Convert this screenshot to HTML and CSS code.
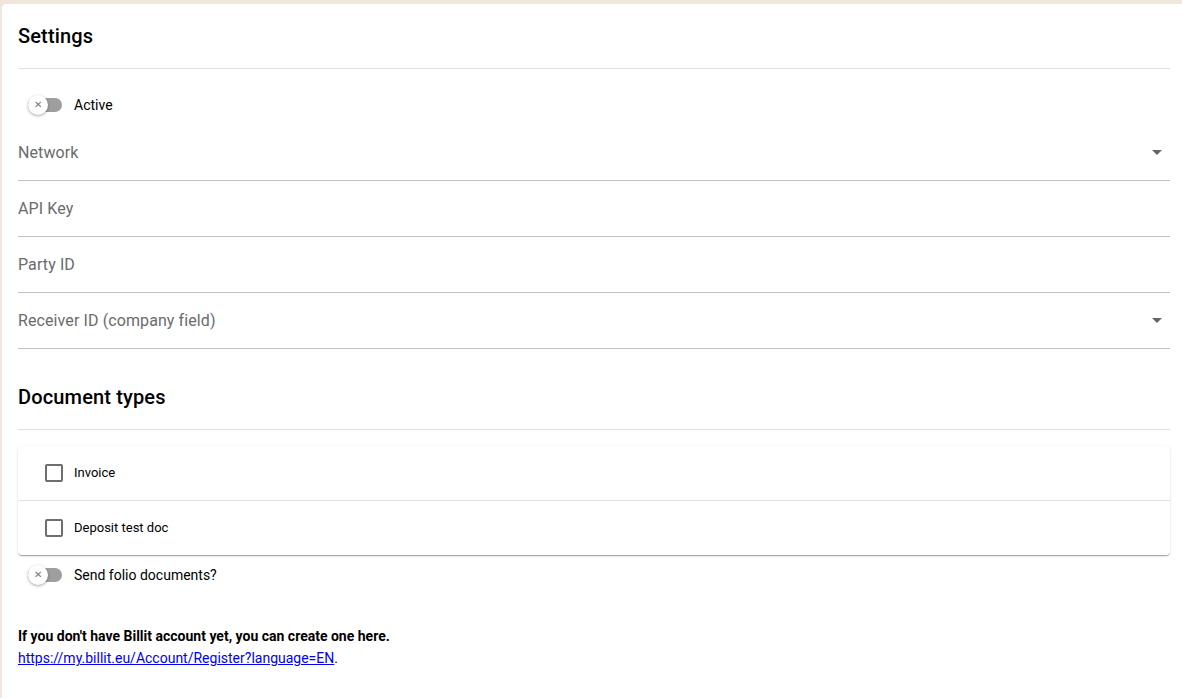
FILE: index.html
```html
<!DOCTYPE html>
<html>
<head>
<meta charset="utf-8">
<link rel="stylesheet" href="styles.css">
</head>
<body>
<div class="card">
  <div class="section-head"><h2>Settings</h2></div>
  <div class="switch-row first">
    <span class="switch"><span class="track"></span><span class="thumb">&#x2715;</span></span>
    <span class="switch-label">Active</span>
  </div>
  <div class="field"><span class="label">Network</span><span class="arrow"></span></div>
  <div class="field"><span class="label">API Key</span></div>
  <div class="field"><span class="label">Party ID</span></div>
  <div class="field"><span class="label">Receiver ID (company field)</span><span class="arrow"></span></div>
  <div class="section-head second"><h2>Document types</h2></div>
  <div class="list">
    <div class="list-row"><span class="checkbox"></span><span class="row-label">Invoice</span></div>
    <div class="list-row"><span class="checkbox"></span><span class="row-label">Deposit test doc</span></div>
  </div>
  <div class="switch-row">
    <span class="switch"><span class="track"></span><span class="thumb">&#x2715;</span></span>
    <span class="switch-label">Send folio documents?</span>
  </div>
  <p class="note"><strong>If you don't have Billit account yet, you can create one here.</strong><br><a href="#">https://my.billit.eu/Account/Register?language=EN</a>.</p>
</div>
</body>
</html>
```
FILE: styles.css
```css
html, body {
  margin: 0;
  padding: 0;
  overflow: hidden;
}
body {
  background: #efe6dc;
  font-family: Roboto, "Liberation Sans", sans-serif;
  color: #000;
  height: 698px;
}
.card {
  box-sizing: border-box;
  margin: 4px 0 0 2px;
  width: 1200px;
  height: 694px;
  padding: 0 32px 0 16px;
  background: #fff;
  border-radius: 4px 4px 0 0;
}
.section-head {
  height: 64px;
  display: flex;
  align-items: center;
  border-bottom: 1px solid #e0e0e0;
}
.section-head.second {
  margin-top: 16px;
}
.section-head h2 {
  margin: 0;
  font-size: 20px;
  font-weight: 500;
  letter-spacing: 0.15px;
}
.switch-row {
  height: 40px;
  display: flex;
  align-items: center;
  padding-left: 10px;
}
.switch-row.first {
  margin-top: 16px;
}
.switch {
  position: relative;
  width: 34px;
  height: 20px;
  display: inline-block;
}
.track {
  position: absolute;
  left: 0;
  top: 3px;
  width: 34px;
  height: 14px;
  border-radius: 7px;
  background: #9e9e9e;
}
.thumb {
  position: absolute;
  left: 0;
  top: 0;
  width: 20px;
  height: 20px;
  border-radius: 50%;
  background: #fff;
  box-shadow: 0 1px 3px rgba(0,0,0,0.35);
  color: #757575;
  font-size: 10px;
  line-height: 20px;
  text-align: center;
}
.switch-label {
  margin-left: 12px;
  font-size: 14px;
}
.field {
  height: 55px;
  border-bottom: 1px solid #c2c2c2;
  display: flex;
  align-items: center;
  justify-content: space-between;
}
.field .label {
  font-size: 16px;
  color: #6b6b6b;
  letter-spacing: 0.1px;
}
.arrow {
  width: 0;
  height: 0;
  border-left: 5px solid transparent;
  border-right: 5px solid transparent;
  border-top: 5px solid #666;
  margin-right: 8px;
}
.list {
  margin-top: 16px;
  border-radius: 4px;
  box-shadow: 0 2px 1px -1px rgba(0,0,0,0.2), 0 1px 1px 0 rgba(0,0,0,0.14), 0 1px 3px 0 rgba(0,0,0,0.12);
  background: #fff;
}
.list-row {
  height: 54px;
  box-sizing: border-box;
  padding-bottom: 1px;
  display: flex;
  align-items: center;
  padding-left: 27px;
}
.list-row + .list-row {
  height: 55px;
  border-top: 1px solid #e0e0e0;
}
.checkbox {
  width: 14px;
  height: 14px;
  border: 2px solid #6e6e6e;
  border-radius: 2px;
  box-sizing: content-box;
}
.row-label {
  margin-left: 11px;
  font-size: 13px;
}
.note {
  margin: 30px 0 0;
  font-size: 14px;
  line-height: 22px;
}
.note strong {
  font-weight: 700;
}
.note a {
  color: #0000ee;
}
```
